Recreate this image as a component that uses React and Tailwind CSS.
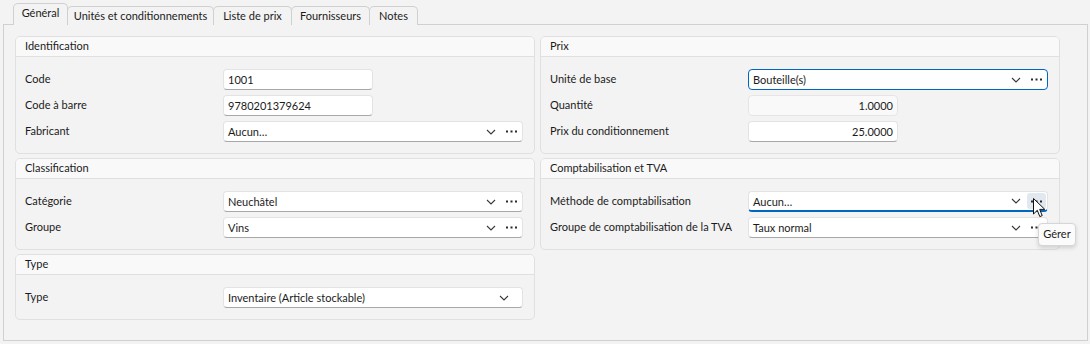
const Chevron = () => (
  <svg width="10" height="6" viewBox="0 0 10 6" className="block">
    <path d="M1 1 L5 5 L9 1" fill="none" stroke="#3a3a3a" strokeWidth="1.1" />
  </svg>
);

const Dots = () => (
  <svg width="11" height="3" viewBox="0 0 11 3" className="block">
    <rect x="0" y="0.5" width="2" height="2" fill="#2a2a2a" />
    <rect x="4.5" y="0.5" width="2" height="2" fill="#2a2a2a" />
    <rect x="9" y="0.5" width="2" height="2" fill="#2a2a2a" />
  </svg>
);

const Cursor = () => (
  <svg width="13" height="20" viewBox="0 0 13 20" className="block">
    <path
      d="M0.5 0.5 L0.5 16 L4.3 12.3 L6.8 18.6 L9.2 17.6 L6.7 11.4 L11.8 11.4 Z"
      fill="#ffffff"
      stroke="#111111"
      strokeWidth="1"
      strokeLinejoin="round"
    />
  </svg>
);

function TextBox({ value, width = 'w-[150px]', align = 'left', disabled = false }) {
  return (
    <div
      className={
        width +
        ' h-[21px] rounded-[4px] border flex items-center px-[4px] ' +
        (disabled
          ? 'bg-[#f9f9f9] border-[#e5e5e5]'
          : 'bg-white border-[#e3e3e3] border-b-[#a8a8a8]') +
        (align === 'right' ? ' justify-end' : '')
      }
    >
      <span className="leading-none">{value}</span>
    </div>
  );
}

function Combo({ value, dots = true, focus = null, hoverDots = false }) {
  let border = 'border-[#e3e3e3] border-b-[#a8a8a8]';
  if (focus === 'full') border = 'border-[#0067c0]';
  if (focus === 'bottom') border = 'border-[#e3e3e3] border-b-2 border-b-[#0067c0]';
  return (
    <div className={'flex-1 h-[21px] rounded-[4px] border bg-white flex items-center pl-[4px] relative ' + border}>
      <span className="flex-1 leading-none">{value}</span>
      <div className="w-[20px] flex justify-center">
        <Chevron />
      </div>
      {dots ? (
        <div
          className={
            'w-[19px] h-[16px] mr-[1px] ml-[1px] rounded-[3px] flex items-center justify-center ' +
            (hoverDots ? 'bg-[#e1e8f0]' : '')
          }
        >
          <Dots />
        </div>
      ) : (
        <div className="w-[8px]" />
      )}
    </div>
  );
}

function Row({ label, children }) {
  return (
    <div className="flex items-center h-[21px] pl-[9px] pr-[11px]">
      <div className="w-[198px] shrink-0 whitespace-nowrap">{label}</div>
      {children}
    </div>
  );
}

function Group({ title, children }) {
  return (
    <div className="rounded-[5px] border border-[#e0e0e0] overflow-hidden">
      <div className="h-[20px] bg-[#f9f9f9] border-b border-[#e0e0e0] pl-[9px] flex items-center">{title}</div>
      <div className="pt-[12px] pb-[11px] flex flex-col gap-[5px]">{children}</div>
    </div>
  );
}

const tabs = [
  { name: 'Général', w: 'w-[55px]' },
  { name: 'Unités et conditionnements', w: 'w-[147px]' },
  { name: 'Liste de prix', w: 'w-[79px]' },
  { name: 'Fournisseurs', w: 'w-[79px]' },
  { name: 'Notes', w: 'w-[49px]' },
];

export default function App() {
  return (
    <div className="w-[1090px] h-[344px] bg-[#f3f3f3] relative overflow-hidden pt-[3px] pl-[3px] text-[11px] text-[#1b1b1b] font-['Lato',sans-serif]">
      {/* tab strip */}
      <div className="flex items-end h-[22px] pl-[10px]">
        {tabs.map((t, i) =>
          i === 0 ? (
            <div
              key={t.name}
              className={t.w + ' h-[22px] relative z-10 bg-[#f3f3f3] border border-b-0 border-[#d0d0d0] rounded-t-[5px] flex items-center justify-center pb-[2px] whitespace-nowrap'}
            >
              {t.name}
            </div>
          ) : (
            <div
              key={t.name}
              className={t.w + ' h-[19px] -ml-px bg-[#f3f3f3] border border-b-0 border-[#d0d0d0] rounded-t-[5px] flex items-center justify-center whitespace-nowrap'}
            >
              {t.name}
            </div>
          )
        )}
      </div>

      {/* tab panel */}
      <div className="-mt-px w-[1085px] h-[317px] border border-[#d0d0d0] pt-[11px] pl-[11px]">
        <div className="grid grid-cols-[520px_520px] gap-x-[5px] items-start">
          <div className="flex flex-col gap-[4px]">
            <Group title="Identification">
              <Row label="Code">
                <TextBox value="1001" />
              </Row>
              <Row label="Code à barre">
                <TextBox value="9780201379624" />
              </Row>
              <Row label="Fabricant">
                <Combo value="Aucun…" />
              </Row>
            </Group>
            <Group title="Classification">
              <Row label="Catégorie">
                <Combo value="Neuchâtel" />
              </Row>
              <Row label="Groupe">
                <Combo value="Vins" />
              </Row>
            </Group>
            <Group title="Type">
              <Row label="Type">
                <Combo value="Inventaire (Article stockable)" dots={false} />
              </Row>
            </Group>
          </div>

          <div className="flex flex-col gap-[4px]">
            <Group title="Prix">
              <Row label="Unité de base">
                <Combo value="Bouteille(s)" focus="full" />
              </Row>
              <Row label="Quantité">
                <TextBox value="1.0000" align="right" disabled />
              </Row>
              <Row label="Prix du conditionnement">
                <TextBox value="25.0000" align="right" />
              </Row>
            </Group>
            <Group title="Comptabilisation et TVA">
              <Row label="Méthode de comptabilisation">
                <Combo value="Aucun…" focus="bottom" hoverDots />
              </Row>
              <Row label="Groupe de comptabilisation de la TVA">
                <Combo value="Taux normal" />
              </Row>
            </Group>
          </div>
        </div>
      </div>

      {/* tooltip */}
      <div className="absolute left-[1038px] top-[223px] w-[38px] h-[23px] bg-[#fbfbfb] border border-[#d6d6d6] rounded-[4px] shadow-[0_2px_4px_rgba(0,0,0,0.15)] flex items-center justify-center">
        Gérer
      </div>

      {/* mouse cursor */}
      <div className="absolute left-[1033px] top-[198px]">
        <Cursor />
      </div>
    </div>
  );
}
